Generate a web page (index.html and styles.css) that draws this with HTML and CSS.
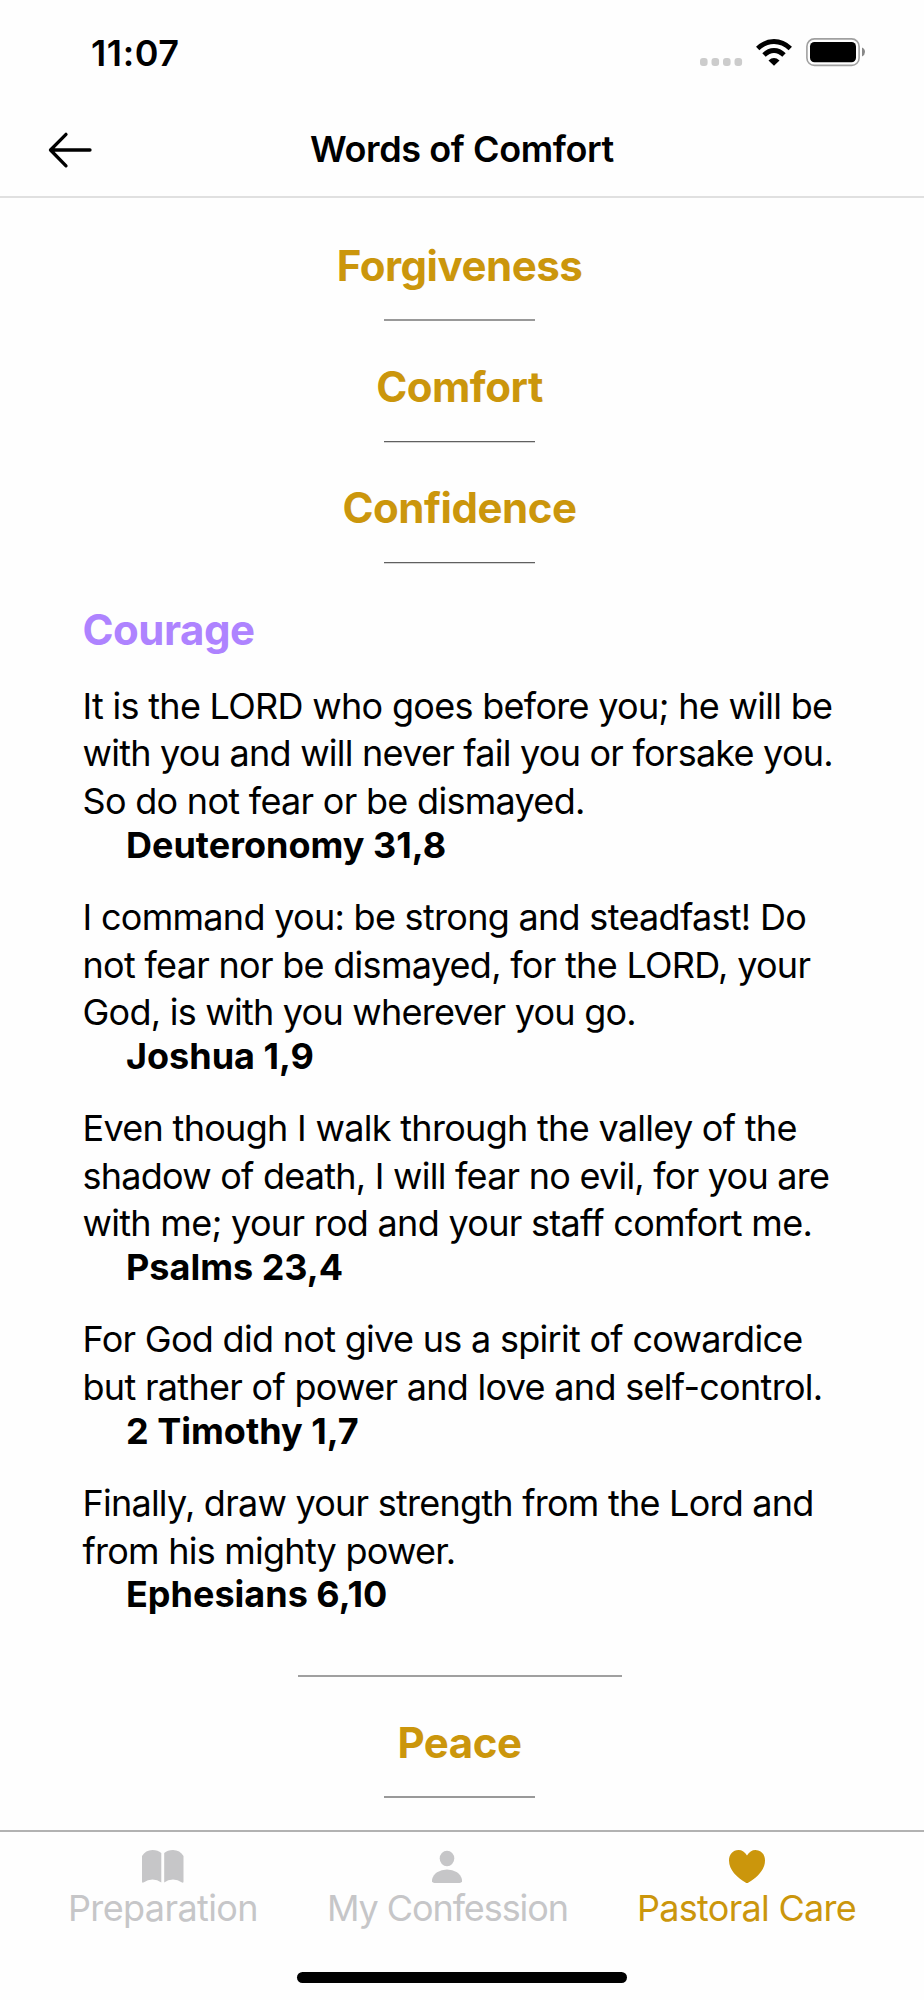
FILE: index.html
```html
<!DOCTYPE html>
<html lang="en">
<head>
<meta charset="utf-8">
<title>Words of Comfort</title>
<link rel="stylesheet" href="styles.css">
</head>
<body>
<div class="screen">
  <div class="status">
    <span class="time">11:07</span>
    <div class="indicators">
      <svg class="dots" width="43" height="8" viewBox="0 0 43 8" fill="#ccc"><rect width="7.6" height="8" rx="3"/><rect x="11.5" width="7.6" height="8" rx="3"/><rect x="23" width="7.6" height="8" rx="3"/><rect x="34.5" width="7.6" height="8" rx="3"/></svg>
      <svg class="wifi" width="36" height="27" viewBox="0 0 36 27"><g fill="none" stroke="#000" stroke-width="4.8"><path d="M1.7 9.5Q9 2.5 18 2.5T34.3 9.5"/><path d="M8 16Q12.5 11.5 18 11.5T28 16"/></g><path d="M12.5 21.4Q15.2 19 18 19T23.5 21.4L18 26.8Z"/></svg>
      <svg class="battery" width="60" height="29" viewBox="0 0 60 29"><rect x=".9" y=".9" width="52.2" height="26.5" rx="7.5" fill="none" stroke="#a0a0a0" stroke-width="1.6"/><rect x="4" y="4" width="46" height="20.2" rx="4.5"/><path d="M56 9.6Q59 11 59 14T56 18.6Z" fill="#888"/></svg>
    </div>
  </div>
  <header class="header">
    <svg class="back" width="46" height="38" viewBox="0 0 46 38" fill="none" stroke="#000" stroke-width="3.3" stroke-linecap="round" stroke-linejoin="round"><path d="M43 19H4M19 3.3L3.5 19L19 34.8"/></svg>
    <h1 class="title">Words of Comfort</h1>
  </header>
  <main class="content">
    <h2 class="topic">Forgiveness</h2>
    <div class="rule soft"></div>
    <h2 class="topic">Comfort</h2>
    <div class="rule"></div>
    <h2 class="topic">Confidence</h2>
    <div class="rule"></div>
    <h2 class="topic open">Courage</h2>
    <div class="verses">
      <article class="verse">
        <p>It is the LORD who goes before you; he will be<br><span class="tight">with you and will never fail you or forsake you.</span><br>So do not fear or be dismayed.</p>
        <cite>Deuteronomy 31,8</cite>
      </article>
      <article class="verse">
        <p>I command you: be strong and steadfast! Do<br>not fear nor be dismayed, for the LORD, your<br><span class="tight">God, is with you wherever you go.</span></p>
        <cite>Joshua 1,9</cite>
      </article>
      <article class="verse">
        <p>Even though I walk through the valley of the<br><span class="tight">shadow of death, I will fear no evil, for you are</span><br>with me; your rod and your staff comfort me.</p>
        <cite>Psalms 23,4</cite>
      </article>
      <article class="verse">
        <p>For God did not give us a spirit of cowardice<br>but rather of power and love and self-control.</p>
        <cite>2 Timothy 1,7</cite>
      </article>
      <article class="verse">
        <p><span class="tight">Finally, draw your strength from the Lord and<br>from his mighty power.</span></p>
        <cite>Ephesians 6,10</cite>
      </article>
    </div>
    <div class="rule wide"></div>
    <h2 class="topic">Peace</h2>
    <div class="rule soft"></div>
  </main>
  <nav class="tabs">
    <a class="tab prep">
      <svg width="42" height="33" viewBox="0 0 42 33" fill="currentColor"><path d="M0 6Q3.5 0 10.5 0Q16 0 19.3 3V32.5Q15.5 29.6 10.5 29.6Q5.500 29.6 2 32.3Q0 33.5 0 31.5Z"/><path d="M41.5 6Q38 0 31 0Q25.5 0 22.2 3V32.5Q26 29.6 31 29.6Q36 29.6 39.5 32.3Q41.5 33.5 41.5 31.5Z"/></svg>
      <span>Preparation</span>
    </a>
    <a class="tab conf">
      <svg width="30" height="33" viewBox="0 0 30 33" fill="currentColor"><ellipse cx="15" cy="8.5" rx="7.3" ry="7.8"/><path d="M0 29.5Q1 25 5 22.2Q9.5 19.5 15 19.5Q20.5 19.5 25 22.2Q29 25 30 29.5Q30.5 33 27.5 33H2.5Q-.5 33 0 29.5Z"/></svg>
      <span>My Confession</span>
    </a>
    <a class="tab care">
      <svg width="36" height="33" viewBox="0 0 36 33" fill="currentColor"><path d="M18 5.5C16 2 13 0 9.5 0C4 0 0 4.3 0 10.5C0 20 8 27.5 16.5 32.5Q18 33.5 19.5 32.5C28 27.5 36 20 36 10.5C36 4.3 32 0 26.5 0C23 0 20 2 18 5.5Z"/></svg>
      <span>Pastoral Care</span>
    </a>
  </nav>
  <div class="home"></div>
</div>
</body>
</html>
```

FILE: styles.css
```css
* { box-sizing: border-box; margin: 0; padding: 0; }
body { background: #fefefe; font-family: Inter, "Liberation Sans", sans-serif; color: #000; }
.screen { width: 924px; height: 2000px; display: flex; flex-direction: column; overflow: hidden; }
.status { height: 104px; padding: 31px 58px 0 91px; display: flex; justify-content: space-between; align-items: flex-start; }
.time { font-size: 36px; line-height: 44px; font-weight: 600; letter-spacing: .6px; }
.indicators { display: flex; padding-top: 7px; align-items: flex-start; }
.dots { margin: 20px 13px 0 0; }
.wifi { margin: 1px 14px 0 0; }
.header { height: 94px; border-bottom: 2px solid #e0e0e0; display: grid; grid-template-columns: 46px 1fr 46px; padding: 22px 47px 0; align-items: start; }
.back { margin-top: 5px; }
.title { font-size: 36px; line-height: 46px; font-weight: 600; text-align: center; white-space: nowrap; letter-spacing: -.4px; }
.content { height: 1632px; padding: 42.5px 87.5px 0 82.5px; display: flex; flex-direction: column; align-items: center; }
.topic { font-size: 42px; line-height: 50px; font-weight: 700; color: #cb960c; white-space: nowrap; letter-spacing: -.48px; }
.rule { flex: none; width: 151px; height: 2px; margin: 28.7px 0 40.7px; background: linear-gradient(#606060 50%, #d4d4d4 50%); }
.soft { margin: 28.4px 0 41px; background: #999; }
.open { align-self: flex-start; color: #ae83ff; }
.verses { align-self: stretch; margin-top: 28.2px; }
.verse { margin-bottom: 29.4px; }
.verse p { font-size: 36px; line-height: 47.6px; white-space: nowrap; letter-spacing: -.7px; }
.verse .tight { letter-spacing: -.76px; }
.verse cite { display: block; margin-left: 43.5px; font-style: normal; font-weight: 700; font-size: 36px; line-height: 39px; }
.wide { width: 324px; margin: 31.8px 0 40.6px; background: #a0a0a0; }
.tabs { height: 132px; border-top: 2px solid #b2b2b2; padding: 18px 68px 0; display: flex; justify-content: space-between; }
.tab { display: flex; flex-direction: column; align-items: center; color: #c6c6c8; }
.tab span { margin-top: 3px; font-size: 36px; line-height: 44px; white-space: nowrap; letter-spacing: -.72px; }
.prep span { letter-spacing: -.62px; }
.prep svg { margin-left: 1px; }
.conf span { letter-spacing: -1.08px; }
.care { color: #cb960c; }
.home { flex: none; align-self: center; width: 330px; height: 11px; margin-top: 10px; border-radius: 6px; background: #000; }
```
